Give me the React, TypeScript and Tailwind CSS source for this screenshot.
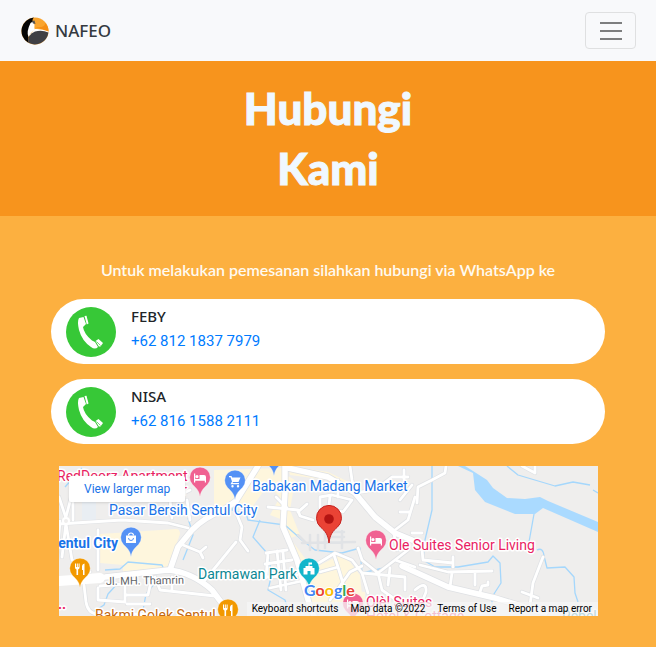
import React from "react";

const baseFont = "font-['Lato','Open_Sans',sans-serif]";

const minorRoads = [
  "M59 524L122 520L168 523L188 528",
  "M66 523L62 557M60 521L57 560M66 518L59 497M66 524L72 560L90 572",
  "M98 530L98 570M66 517L73 490M73 480L73 520",
  "M84 585L86 602Q88 614 98 614L150 614",
  "M100 586L125 584M98 600L98 588M98 600L125 602L125 580M126 595L148 595L152 577M127 604L150 604",
  "M155 577L160 590L215 596M172 577L172 590M150 584L160 582",
  "M183 545L200 552L203 558M200 552L206 547",
  "M205 580L236 542M172 518L170 500L190 490M190 520L187 500",
  "M235 510L242 527L240 540L248 551",
  "M268 507L298 510L300 516L313 520M298 512L307 504M276 497L287 508",
  "M320 497L320 508L343 512L352 500L332 495ZM330 497L328 512M338 480L338 497",
  "M355 493L375 490L392 477L408 477M404 470L404 485",
  "M266 553L287 550M265 564L292 560M267 577L297 575M270 588L302 581M268 553L266 578M283 552L286 590M277 551L281 590",
  "M317 564L335 553L352 560L362 573L368 593M320 572L338 567L334 555M338 567L345 590M330 600L350 572L362 566",
  "M358 548L362 560L378 573L395 560L415 567M378 573L382 590L406 607M395 560L408 550M362 573L405 577L405 590M390 568L388 585",
  "M415 497L408 520L395 530M400 512L410 512M394 534L397 550M412 485L400 500",
  "M417 503L418 487L432 480L445 473L446 466M412 533L422 533M422 550L423 560L453 563M453 557L453 567",
  "M420 565L448 572L492 571M452 573L450 587M475 573L475 585M480 592L482 586L488 585L488 582",
  "M543 557L533 583L530 605M522 592L538 598M522 466L535 473L535 466",
  "M415 590Q427 580 426 592L420 607",
  "M350 466L352 480L355 493",
];

const estateRoads = [
  "M302 543L355 542M298 535L306 543M310 535L310 550M318 535L318 550M325 533L325 548M342 531L342 548M325 532L344 532M325 537L344 537",
];

const mainRoads = [
  "M59 581L105 577L168 570Q192 572 212 590L230 614",
  "M170 570L178 547L192 530Q205 517 222 511L236 501L258 466",
  "M285 466L285 493L283 527L297 560L310 607L314 616",
  "M288 468L328 477L355 493L375 517L395 533L412 540",
  "M402 566L448 587L495 598L545 613",
];

const streams = [
  "M507 466L518 475L555 486L573 482L590 485M593 490L598 493",
  "M534 514L529 542M537 550Q543 547 544 556L547 568L565 567L574 577L575 593L578 602",
  "M432 466L432 510L425 540L423 560L435 567L458 567L488 562L493 556L500 563L501 583L492 597L492 607",
  "M245 510L248 520L285 525L302 540L315 550L342 553L360 548L362 573L388 567",
  "M260 520L253 537L267 553L272 573L268 590L285 600L290 616",
  "M105 570L120 569L128 562L162 565L165 572M188 518L193 535L183 560",
  "M118 583L108 594L104 605L93 612M155 583L146 594L143 610M65 487L82 468M238 500L232 510L252 516",
];

function Pin({ x, y, color, children }: { x: number; y: number; color: string; children?: React.ReactNode }) {
  return (
    <g transform={`translate(${x} ${y})`}>
      <path
        d="M0 19C-1 12-4 10-7.500 6.500A10.300 10.300 0 1 1 7.500 6.500C4 10 1 12 0 19Z"
        fill={color}
        stroke="#fff"
        strokeOpacity=".5"
        strokeWidth=".6"
      />
      <g fill="#fff" stroke="none">{children}</g>
    </g>
  );
}

const Bed = () => (
  <path d="M-6-4.500h1.200V1H-.5V-3H4Q6-3 6-1V4.500H4.800V2.800H-4.800V4.500H-6ZM-3-3a1.600 1.600 0 1 1 0 3.200a1.600 1.600 0 0 1 0-3.200Z" />
);
const Cutlery = () => (
  <path d="M-5-5.500h1v3.500h.8v-3.500h1v3.500h.8v-3.500h1v4q0 1.500-1.500 2V6h-1.600V.5Q-5 0-5-1.500ZM2-3Q2.500-5.500 4.500-5.500V6H3V1H2Z" />
);

function MapDrawing() {
  return (
    <svg
      className="block h-full w-full font-['Roboto',sans-serif]"
      viewBox="59 466 539 150"
      preserveAspectRatio="xMidYMid slice"
      role="img"
      aria-label="Map of Sentul City"
    >
      <rect x="0" y="400" width="800" height="300" fill="#efeeed" />
      <g fill="#fef6dd">
        <path d="M100 534L176 529Q180 529 180 534L168 568L123 572V565L100 563Z" />
        <path d="M214 470L283 468V520L270 515L280 497L268 485L250 510L236 500L214 510Z" />
        <path d="M288 466L328 472L357 486L355 492L328 480L290 475Z" />
        <path d="M286 475L295 480L290 510L300 535L290 538L310 565L302 570L286 530Z" />
        <path d="M300 575L340 555L350 562L360 575L362 595L320 600Z" />
        <path d="M306 570L330 562L345 590L365 592V600L310 605Z" />
      </g>
      <rect x="82" y="500" width="14" height="20" fill="#e9eef3" />
      <path
        fill="#aadaff"
        d="M458 466L473 473L475 490L485 502L515 514L535 514L543 508L598 532V522L548 501L540 497L525 499L507 498L493 488L487 480L473 471L465 466Z"
      />
      <g fill="none" stroke="#a5d7fc" strokeWidth="1.300" strokeLinejoin="round">
        {streams.map((d) => <path key={d} d={d} />)}
      </g>
      <g fill="none" strokeLinejoin="round" strokeLinecap="round">
        <g stroke="#dfe1e4" strokeWidth="4.200">
          {minorRoads.map((d) => <path key={d} d={d} />)}
        </g>
        <g stroke="#dfe1e4" strokeWidth="7">
          {mainRoads.map((d) => <path key={d} d={d} />)}
        </g>
        <g stroke="#e1e3e6" strokeWidth="2.500">
          {estateRoads.map((d) => <path key={d} d={d} />)}
        </g>
        <g stroke="#fff" strokeWidth="2.800">
          {minorRoads.map((d) => <path key={d} d={d} />)}
        </g>
        <g stroke="#fff" strokeWidth="5.500">
          {mainRoads.map((d) => <path key={d} d={d} />)}
        </g>
        <path d="M59 581L100 578" stroke="#fff" strokeWidth="10" />
        <circle cx="66" cy="521" r="3" fill="#efeeed" stroke="#fff" strokeWidth="2" />
      </g>

      <g fontSize="14" stroke="#fff" strokeWidth="3" strokeLinejoin="round" paintOrder="stroke">
        <g fill="#e91e63">
          <text x="57" y="481">RedDoorz Apartment</text>
          <text x="187" y="495" textAnchor="end">r</text>
          <text x="389" y="550">Ole Suites Senior Living</text>
          <text x="366" y="607">Olè! Suites</text>
          <text x="366" y="621">Hotel &amp; Cottage</text>
          <text x="58" y="609" fontWeight="700">..</text>
        </g>
        <g fill="#1a73e8">
          <text x="252" y="491">Babakan Madang Market</text>
          <text x="109" y="515">Pasar Bersih Sentul City</text>
          <text x="118" y="548" textAnchor="end" fontWeight="700">Sentul City</text>
        </g>
        <g fill="#0b8793">
          <text x="198" y="579">Darmawan Park</text>
          <text x="562" y="621">Rebel</text>
        </g>
        <text x="95" y="620" fill="#c5690f">Bakmi Golek Sentul</text>
        <text x="106" y="585" fontSize="11" fill="#5f6368" transform="rotate(-1 106 585)">Jl. MH. Thamrin</text>
      </g>

      <Pin x={200} y={478} color="#f06292"><Bed /></Pin>
      <Pin x={376} y={541} color="#f06292"><Bed /></Pin>
      <Pin x={353} y={604} color="#f06292"><Bed /></Pin>
      <Pin x={80} y={569} color="#f29900"><Cutlery /></Pin>
      <Pin x={228} y={610} color="#f29900"><Cutlery /></Pin>
      <Pin x={274} y={457} color="#5491f5" />
      <Pin x={235} y={481} color="#5491f5">
        <path d="M-6-5h2.500l.7 1.500H5.500L3.500 1H-2L-2.500 2H4v1.300H-4.500L-3 .5-4.500-3.700H-6ZM-2.500 4a1.200 1.200 0 1 1 0 2.400a1.200 1.200 0 0 1 0-2.400ZM3 4a1.200 1.200 0 1 1 0 2.400A1.200 1.200 0 0 1 3 4Z" />
      </Pin>
      <Pin x={131} y={538} color="#5491f5">
        <path d="M-5-2.500H5V5H-5Z" />
        <path d="M-2.500-2.500a2.500 2.500 0 0 1 5 0" fill="none" stroke="#fff" strokeWidth="1.200" />
        <path d="M-2.500 0a2.500 2.500 0 0 0 5 0" fill="none" stroke="#5491f5" strokeWidth="1" />
      </Pin>
      <Pin x={309} y={569} color="#12b5cb">
        <path d="M-5.500 5.500V-1H-3.500V-3H-.5V-6.500H3V-4.500H.5V-3H3.500V-1H5.500V5.500H1.500V2H-1.500V5.500Z" />
      </Pin>
      <g transform="translate(329 519)">
        <path
          d="M0 24C-1 15-4 12-8 8.500A12.500 12.500 0 1 1 8 8.500C4 12 1 15 0 24Z"
          fill="#ea4335"
          stroke="#c5221f"
          strokeWidth="1"
        />
        <circle r="4.800" fill="#b31412" />
      </g>
      <text
        x="304" y="596" fontSize="16" fontWeight="700" stroke="#fff" strokeWidth="2"
        paintOrder="stroke" className="font-['Lato',sans-serif]"
      >
        <tspan fill="#4285f4">G</tspan>
        <tspan fill="#ea4335">o</tspan>
        <tspan fill="#fbbc04">o</tspan>
        <tspan fill="#4285f4">g</tspan>
        <tspan fill="#34a853">l</tspan>
        <tspan fill="#ea4335">e</tspan>
      </text>
    </svg>
  );
}

function Logo() {
  return (
    <svg className="size-7" viewBox="0 0 28 28" aria-hidden="true">
      <circle cx="14" cy="14" r="13.500" fill="#f9a52f" />
      <path d="M13 .5A13.500 13.500 0 0 0 7 25.500L8 16L13 6Q10 3 13 .5Z" fill="#050505" />
      <path d="M14 10L27.500 14.500Q28 10 24 6Q25 11 14 10Z" fill="#f58f16" />
      <path d="M9.500 6Q13 3.500 13.500 8Q13 11 14 13Q10 15 7.500 20Q5 15 9.500 6Z" fill="#fff" />
      <path d="M14 12Q21 11.500 27.500 14.500L27 17L8 19Z" fill="#fff" />
      <path d="M27.400 15.500A13.500 13.500 0 0 1 7 25.500Q7 17 14 14.500Q21 12.500 27.400 15.500Z" fill="#404044" />
      <path d="M11 4L13.500 3.500L14.500 7L12 6.500Z" fill="#555" />
    </svg>
  );
}

function PhoneIcon() {
  return (
    <svg className="size-[50px] shrink-0" viewBox="0 0 50 50" aria-hidden="true">
      <circle cx="25" cy="25" r="25" fill="#37c837" />
      <g fill="#fff">
        <path d="M13 11L17.500 10L20 17L17 20Q18 27 26 33.500L29 35L32 40Q29 43 25 40Q16 34 13 23Q11 14 13 11Z" />
        <path d="M18.500 9L20.500 8.800L22.500 16.500L20.800 17.500Z" />
        <path d="M29.500 34L32.500 32L37 36L34.500 39.500L32.800 39.500Z" />
      </g>
      <path d="M30.500 34.500L34.500 38.500" stroke="#37c837" strokeWidth=".7" />
    </svg>
  );
}

function Contact({ name, phone }: { name: string; phone: string }) {
  return (
    <li className="flex items-start gap-[15px] rounded-[33px] bg-white px-[15px] pt-2 pb-[7px]">
      <PhoneIcon />
      <div className="-mt-[3px] leading-[25px]">
        <p className="font-['Noto_Sans',sans-serif] text-[15px] font-medium text-[#212529]">{name}</p>
        <a className="block font-['Roboto',sans-serif] text-[15px] text-[#007bff]" href={`tel:${phone.replace(/ /g, "")}`}>{phone}</a>
      </div>
    </li>
  );
}

export default function App() {
  return (
    <div className={`min-h-screen bg-[#fcb040] ${baseFont}`}>
      <nav className="flex items-center justify-between bg-[#f8f9fb] py-3 pr-5 pl-[21px]">
        <a href="#" className="flex items-center gap-[6px] font-['Noto_Sans',sans-serif] text-[17px] leading-6 font-medium text-[#343a40]">
          <Logo />
          NAFEO
        </a>
        <button
          type="button"
          aria-label="Toggle navigation"
          className="flex h-[37px] w-[51px] items-center justify-center rounded border border-[#dfe0e1]"
        >
          <svg className="size-[30px]" viewBox="0 0 30 30" fill="none" stroke="#7d7e7f" strokeWidth="2">
            <path d="M4 7h22M4 15h22M4 23h22" />
          </svg>
        </button>
      </nav>
      <header className="bg-[#f7941d] pt-[17px] pb-[18px]">
        <h1 className="mx-auto w-56 text-center text-[44px] leading-[60px] font-black text-[#f0f8ff] [-webkit-text-stroke:1px_#f0f8ff] [stroke-linejoin:round]">
          Hubungi Kami
        </h1>
      </header>
      <main className="px-[51px] pt-[41px] pb-[31px]">
        <p className="mb-4 text-center text-base leading-[26px] font-semibold text-[#fffaf0]">
          Untuk melakukan pemesanan silahkan hubungi via WhatsApp ke
        </p>
        <ul className="flex flex-col gap-[15px]">
          <Contact name="FEBY" phone="+62 812 1837 7979" />
          <Contact name="NISA" phone="+62 816 1588 2111" />
        </ul>
        <section className="relative mt-[22px] mr-[7px] ml-2 h-[150px] overflow-hidden font-['Roboto',sans-serif]">
          <MapDrawing />
          <a
            href="#"
            className="absolute top-[10px] left-[10px] rounded-xs bg-white px-[15px] py-[5px] text-xs leading-4 text-[#1a73e8] shadow-sm"
          >
            View larger map
          </a>
          <div className="absolute right-0 bottom-0 flex gap-3 bg-[#f5f5f5]/75 pr-[6px] pl-[5px] text-[10px] leading-[14px] whitespace-nowrap text-black">
            <button type="button">Keyboard shortcuts</button>
            <span>Map data ©2022</span>
            <a href="#">Terms of Use</a>
            <a href="#">Report a map error</a>
          </div>
        </section>
      </main>
    </div>
  );
}
